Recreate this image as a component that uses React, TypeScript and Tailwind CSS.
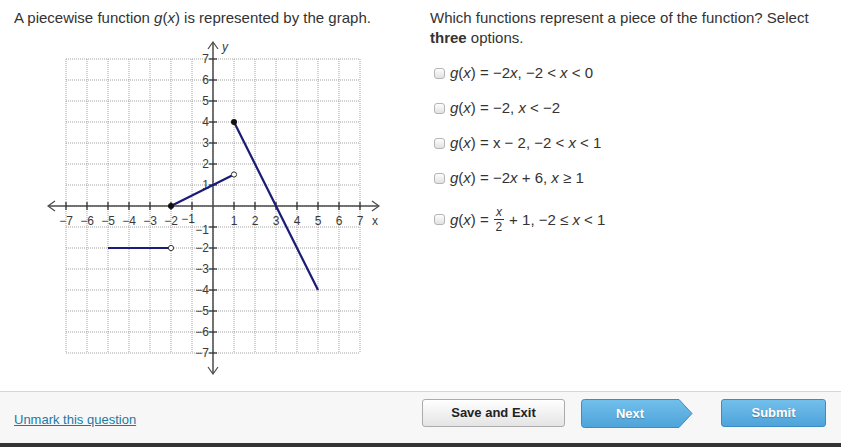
import React from "react";

const ox = 173;
const oy = 168;
const u = 21;
const X = (v: number) => ox + v * u;
const Y = (v: number) => oy - v * u;
const range = [-7, -6, -5, -4, -3, -2, -1, 0, 1, 2, 3, 4, 5, 6, 7];
const lbl = (n: number) => (n < 0 ? `\u2212${-n}` : `${n}`);

function Graph() {
  const line = "#1b1b78";
  return (
    <svg width={345} height={342} viewBox="0 0 345 342" className="ml-[26px] mt-[10px] block">
      {range.map((i) => (
        <g key={i}>
          <line x1={X(i)} y1={Y(7)} x2={X(i)} y2={Y(-7)} stroke="#a3a3a3" strokeDasharray="1 1" />
          <line x1={X(-7)} y1={Y(i)} x2={X(7)} y2={Y(i)} stroke="#a3a3a3" strokeDasharray="1 1" />
        </g>
      ))}
      {/* axes */}
      <line x1={9} y1={oy} x2={338} y2={oy} stroke="#4a4a4a" strokeWidth={1.5} />
      <line x1={ox} y1={5} x2={ox} y2={335} stroke="#4a4a4a" strokeWidth={1.5} />
      <path d={`M15,${oy - 5} L8,${oy} L15,${oy + 5}`} fill="none" stroke="#4a4a4a" strokeWidth={1.2} />
      <path d={`M332,${oy - 5} L339,${oy} L332,${oy + 5}`} fill="none" stroke="#4a4a4a" strokeWidth={1.2} />
      <path d={`M${ox - 5},11 L${ox},4 L${ox + 5},11`} fill="none" stroke="#4a4a4a" strokeWidth={1.2} />
      <path d={`M${ox - 5},329 L${ox},336 L${ox + 5},329`} fill="none" stroke="#4a4a4a" strokeWidth={1.2} />
      {range
        .filter((i) => i !== 0)
        .map((i) => (
          <g key={`t${i}`} fontFamily="'Liberation Sans', Arial, sans-serif" fontSize={12} fill="#3a3a3a">
            <line x1={X(i)} y1={oy - 4} x2={X(i)} y2={oy + 4} stroke="#333" strokeWidth={1.3} />
            <line x1={ox - 4} y1={Y(i)} x2={ox + 4} y2={Y(i)} stroke="#333" strokeWidth={1.3} />
            <text x={i === -1 ? X(i) - 4 : X(i)} y={i === -1 ? oy + 17 : oy + 19} textAnchor="middle">
              {lbl(i)}
            </text>
            <text x={ox - 4} y={i === -1 ? Y(i) + 7 : Y(i) + 4} textAnchor="end">
              {lbl(i)}
            </text>
          </g>
        ))}
      <text x={182} y={13} fontFamily="'Liberation Sans', Arial, sans-serif" fontSize={12} fontStyle="italic" fill="#3a3a3a">
        y
      </text>
      <text x={332} y={oy + 19} fontFamily="'Liberation Sans', Arial, sans-serif" fontSize={12} fill="#3a3a3a">
        x
      </text>
      {/* pieces */}
      <line x1={X(-5)} y1={Y(-2)} x2={X(-2)} y2={Y(-2)} stroke={line} strokeWidth={2.2} />
      <line x1={X(-2)} y1={Y(0)} x2={X(1)} y2={Y(1.5)} stroke={line} strokeWidth={2.2} />
      <line x1={X(1)} y1={Y(4)} x2={X(5)} y2={Y(-4)} stroke={line} strokeWidth={2.2} />
      <circle cx={X(-2)} cy={Y(0)} r={3} fill="#111" />
      <circle cx={X(1)} cy={Y(4)} r={3} fill="#111" />
      <circle cx={X(1)} cy={Y(1.5)} r={2.6} fill="#fff" stroke="#333" strokeWidth={1} />
      <circle cx={X(-2)} cy={Y(-2)} r={2.6} fill="#fff" stroke="#333" strokeWidth={1} />
    </svg>
  );
}

function Box() {
  return (
    <span className="inline-block h-[11px] w-[11px] shrink-0 rounded-[3px] border border-[#b5b5b5] bg-gradient-to-b from-[#fdfdfd] to-[#e2e2e2]" />
  );
}

const G = () => (
  <>
    <i>g</i>(<i>x</i>)
  </>
);

function Option({ children }: { children: React.ReactNode }) {
  return (
    <li className="flex items-center gap-[5px]">
      <Box />
      <span>{children}</span>
    </li>
  );
}

export default function App() {
  return (
    <div className="w-[841px] h-[447px] bg-white text-[#333] font-['Liberation_Sans',Arial,sans-serif] flex flex-col overflow-hidden">
      <div className="flex h-[391px]">
        <div className="w-[430px] pl-[14px] pt-[8px]">
          <p className="text-[15px] leading-[20px]">
            A piecewise function <G /> is represented by the graph.
          </p>
          <Graph />
        </div>
        <div className="w-[400px] pt-[8px]">
          <p className="text-[15px] leading-[20px]">
            Which functions represent a piece of the function? Select <b>three</b> options.
          </p>
          <ul className="mt-[15px] pl-[4px] flex flex-col gap-[15px] text-[15px] leading-[20px]">
            <Option>
              <G /> = −2<i>x</i>, −2 &lt; <i>x</i> &lt; 0
            </Option>
            <Option>
              <G /> = −2, <i>x</i> &lt; −2
            </Option>
            <Option>
              <G /> = x − 2, −2 &lt; <i>x</i> &lt; 1
            </Option>
            <Option>
              <G /> = −2<i>x</i> + 6, <i>x</i> ≥ 1
            </Option>
            <li className="flex items-center gap-[5px] mt-[3px]">
              <Box />
              <span className="flex items-center">
                <G />
                &nbsp;=&nbsp;
                <span className="inline-flex flex-col items-center text-[12px] leading-[12px] mx-[1px]">
                  <i className="border-b border-[#333] px-[2px] pb-[1px]">x</i>
                  <span className="pt-[1px]">2</span>
                </span>
                &nbsp;+ 1, −2 ≤ <i>&nbsp;x</i>&nbsp;&lt; 1
              </span>
            </li>
          </ul>
        </div>
      </div>
      <div className="flex h-[52px] border-t border-[#d6d6d6] bg-[#f7f7f7]">
        <a href="#" className="self-center mt-[4px] pl-[14px] text-[13px] text-[#1b7aa5] underline">
          Unmark this question
        </a>
        <div className="ml-auto mr-[15px] mt-[7px] flex self-start">
          <button className="h-[28px] w-[143px] rounded-[3px] border border-[#ababab] bg-gradient-to-b from-white to-[#e4e4e4] text-[13px] font-bold text-[#222]">
            Save and Exit
          </button>
          <div className="relative ml-[16px] h-[29px] w-[112px]">
            <svg className="absolute inset-0" width={112} height={29} viewBox="0 0 112 29">
              <defs>
                <linearGradient id="nb" x1="0" y1="0" x2="0" y2="1">
                  <stop offset="0" stopColor="#72bfec" />
                  <stop offset="1" stopColor="#4ea3da" />
                </linearGradient>
              </defs>
              <path d="M3.5,0.5 H98 L111,14.5 L98,28.5 H3.5 Q0.5,28.5 0.5,25.5 V3.5 Q0.5,0.5 3.5,0.5 Z" fill="url(#nb)" stroke="#3c8bc3" />
            </svg>
            <span className="relative flex h-full w-[98px] items-center justify-center text-[13px] font-bold text-white [text-shadow:0_1px_1px_rgba(0,0,0,0.25)]">
              Next
            </span>
          </div>
          <button className="ml-[28px] h-[28px] w-[105px] rounded-[3px] border border-[#3c8bc3] bg-gradient-to-b from-[#72bfec] to-[#4ea3da] text-[13px] font-bold text-white [text-shadow:0_1px_1px_rgba(0,0,0,0.25)]">
            Submit
          </button>
        </div>
      </div>
      <div className="h-[4px] bg-[#333]" />
    </div>
  );
}
